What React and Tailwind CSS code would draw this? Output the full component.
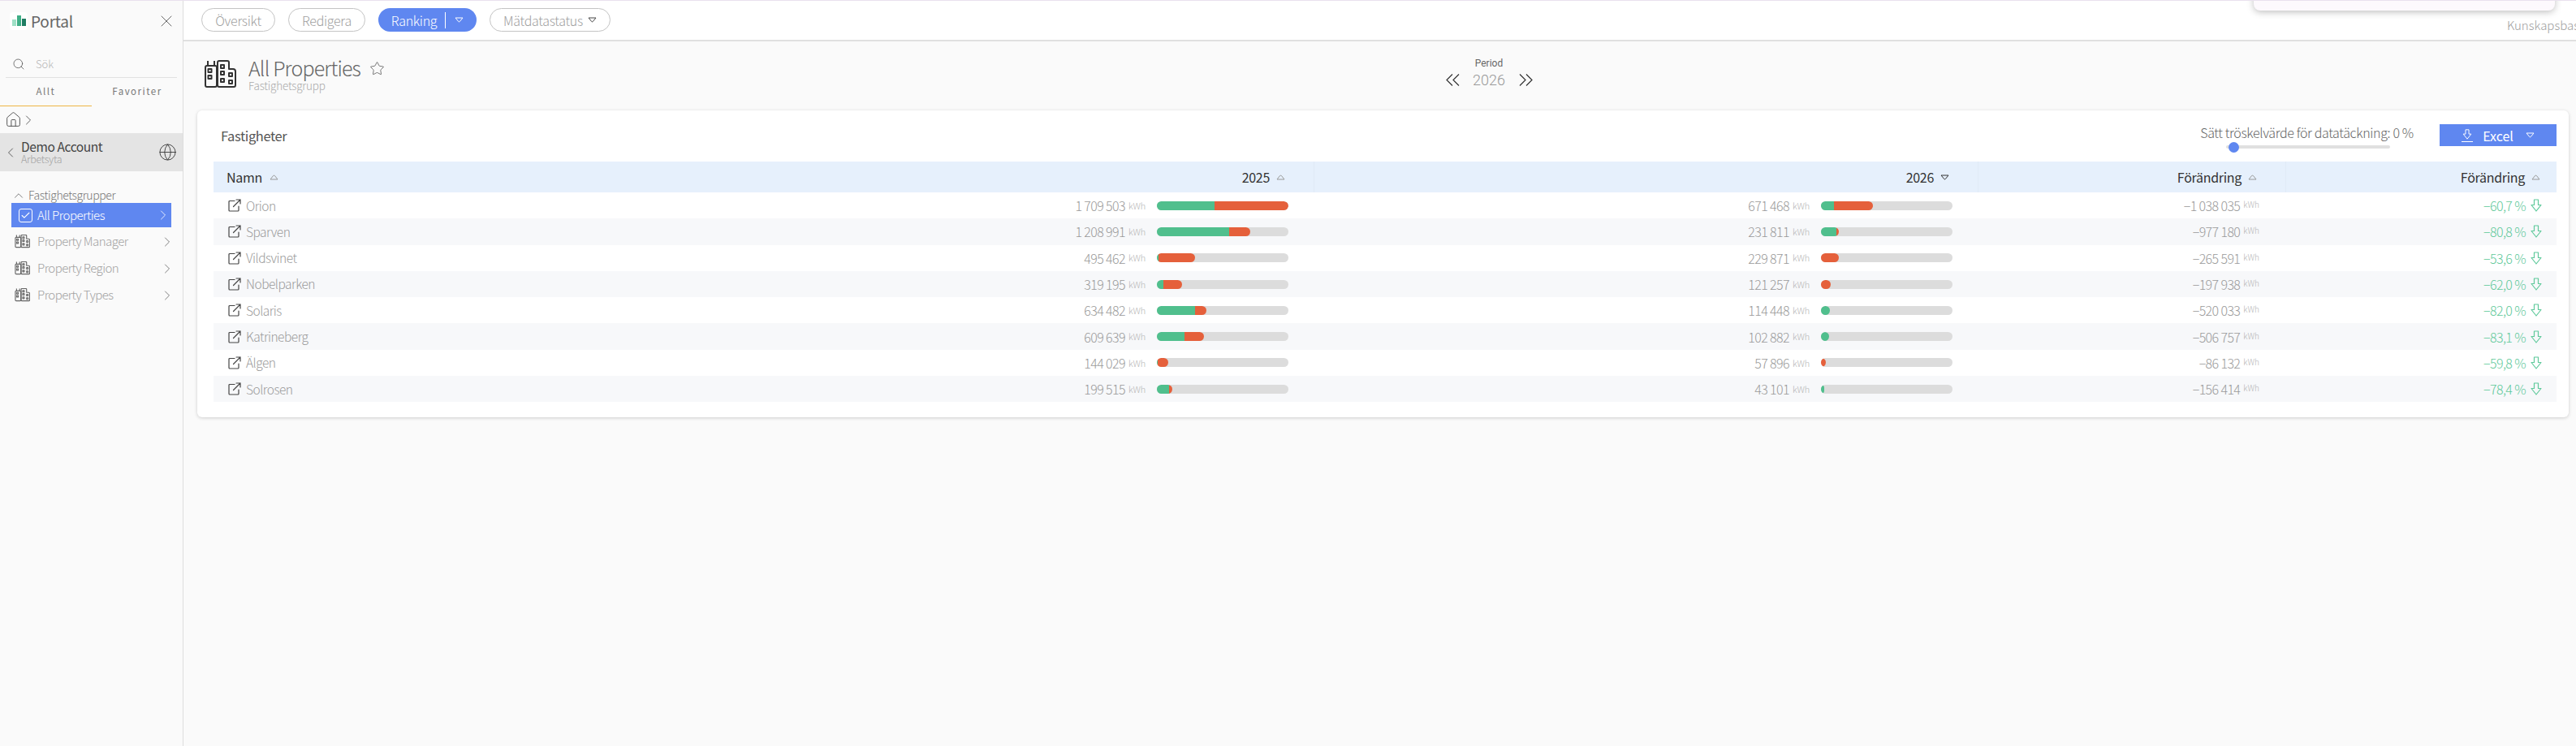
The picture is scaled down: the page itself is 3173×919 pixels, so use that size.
import React from "react";
import { Search, X, ChevronRight, ChevronLeft, ChevronUp, Globe, Star, House, Check } from "lucide-react";

const rows = [
  { name: "Orion", a: "1 709 503", aBar: [71, 91], b: "671 468", bBar: [16, 48], diff: "−1 038 035", pct: "−60,7 %" },
  { name: "Sparven", a: "1 208 991", aBar: [89, 26], b: "231 811", bBar: [19, 3], diff: "−977 180", pct: "−80,8 %" },
  { name: "Vildsvinet", a: "495 462", aBar: [2, 45], b: "229 871", bBar: [0, 22], diff: "−265 591", pct: "−53,6 %" },
  { name: "Nobelparken", a: "319 195", aBar: [8, 23], b: "121 257", bBar: [0, 12], diff: "−197 938", pct: "−62,0 %" },
  { name: "Solaris", a: "634 482", aBar: [47, 14], b: "114 448", bBar: [11, 0], diff: "−520 033", pct: "−82,0 %" },
  { name: "Katrineberg", a: "609 639", aBar: [34, 24], b: "102 882", bBar: [10, 0], diff: "−506 757", pct: "−83,1 %" },
  { name: "Älgen", a: "144 029", aBar: [1, 13], b: "57 896", bBar: [0, 6], diff: "−86 132", pct: "−59,8 %" },
  { name: "Solrosen", a: "199 515", aBar: [15, 4], b: "43 101", bBar: [4, 0], diff: "−156 414", pct: "−78,4 %" },
];

const cols = "grid grid-cols-[538px_818px_818px_379px_333px]";
const numText = "tracking-[-0.6px]";

function Caret({ up, className = "" }) {
  return (
    <svg width="11" height="7" viewBox="0 0 11 7" className={className} fill="none" stroke="currentColor" strokeWidth="1">
      {up ? <path d="M1 6 L4.5 1.5 Q5.5 .8 6.5 1.5 L10 6 Z" /> : <path d="M1 1 L10 1 L6.2 5.6 Q5.5 6.2 4.8 5.6 Z" />}
    </svg>
  );
}

function Buildings({ size = 40, className = "", sw = 2 }) {
  return (
    <svg width={size} height={size * 0.85} viewBox="0 0 40 34" className={className} fill="none" stroke="currentColor" strokeWidth={sw} strokeLinejoin="round">
      <path d="M2 9 a2 2 0 0 1 2-2 h10 a2 2 0 0 1 2 2 v22 a2 2 0 0 1-2 2 h-10 a2 2 0 0 1-2-2 z" />
      <path d="M5 7 V1 M13 7 V1" />
      <rect x="5.5" y="11" width="4" height="4" />
      <rect x="5.5" y="19" width="4" height="4" />
      <path d="M17 3 a2 2 0 0 1 2-2 h10 a2 2 0 0 1 2 2 v8 h5 a3 3 0 0 1 3 3 v17 a2 2 0 0 1-2 2 h-18 a2 2 0 0 1-2-2 z" />
      <rect x="21" y="6" width="4" height="4" />
      <rect x="21" y="14" width="4" height="4" />
      <rect x="21" y="23" width="4" height="4" />
      <rect x="31" y="16" width="4" height="4" />
      <rect x="31" y="25" width="4" height="4" />
    </svg>
  );
}

function ExternalIcon() {
  return (
    <svg width="16" height="16" viewBox="0 0 16 16" fill="none" stroke="#444" strokeWidth="1.2" strokeLinecap="round" className="shrink-0">
      <path d="M8 2.5 H2 a1 1 0 0 0-1 1 V14 a1 1 0 0 0 1 1 H12 a1 1 0 0 0 1-1 V9" />
      <path d="M6.5 9.5 L15 1 M10 1 H15 V6" />
    </svg>
  );
}

function DownArrow({ className = "" }) {
  return (
    <svg width="14" height="16" viewBox="0 0 14 16" fill="none" stroke="currentColor" strokeWidth="1.2" strokeLinejoin="round" className={className}>
      <path d="M4.5 1 H9.5 V7.5 H13 L7 15 L1 7.5 H4.5 Z" />
    </svg>
  );
}

function DoubleChevron({ right }) {
  return (
    <svg width="17" height="15" viewBox="0 0 17 15" fill="none" stroke="#333" strokeWidth="1.2" className={right ? "rotate-180" : ""}>
      <path d="M8 .5 L1 7.5 L8 14.5 M16 .5 L9 7.5 L16 14.5" />
    </svg>
  );
}

function Bar({ parts }) {
  return (
    <div className="flex h-[11px] w-[162px] shrink-0 overflow-hidden rounded-full bg-[#dcdcdc]">
      <div className="flex overflow-hidden rounded-r-full">
        <div className="h-full bg-[#50bf8d]" style={{ width: parts[0] }} />
        <div className="h-full bg-[#e5603b]" style={{ width: parts[1] }} />
      </div>
    </div>
  );
}

function Pill({ children, className = "" }) {
  return (
    <div className={`flex h-[29px] items-center justify-center rounded-full border border-[#c4c4c4] text-[16px] tracking-[-0.3px] text-[#a0a0a0] ${className}`}>
      {children}
    </div>
  );
}

function SideRow({ label }) {
  return (
    <div className="flex h-[33px] items-center pl-[18px] pr-[9px] text-[15px] tracking-[-0.55px] text-[#a3a3a3]">
      <Buildings size={19} sw={2.4} className="text-[#666]" />
      <span className="ml-[9px] flex-1">{label}</span>
      <ChevronRight size={20} strokeWidth={1} className="text-[#666]" />
    </div>
  );
}

export default function App() {
  return (
    <div className="relative flex h-[919px] w-[3173px] overflow-hidden border-t border-[#e9e1ee] bg-[#fafafa] font-['Noto_Sans_CJK_SC',sans-serif] font-light">
      {/* Sidebar */}
      <aside className="flex w-[226px] shrink-0 flex-col border-r border-[#dddddd] bg-[#fafafa]">
        <div className="flex h-[50px] items-center pl-[12px] pr-[8px]">
          <div className="flex h-[22px] w-[22px] items-end justify-center gap-[1px] rounded bg-white pb-[5px]">
            <div className="h-[8px] w-[5px] bg-[#9fe0c6]" />
            <div className="h-[13px] w-[5px] bg-[#3fae86]" />
            <div className="h-[9px] w-[5px] bg-[#1f7d63]" />
          </div>
          <span className="ml-[4px] flex-1 text-[19px] font-normal tracking-[-0.2px] text-[#666]">Portal</span>
          <X size={24} strokeWidth={0.8} className="text-[#444]" />
        </div>
        <div className="mx-[7px] mt-[12px] flex h-[33px] items-center border-b border-[#e2e2e2] pl-[8px]">
          <Search size={16} strokeWidth={1.2} className="text-[#555]" />
          <span className="ml-[13px] text-[13px] text-[#b5b5b5]">Sök</span>
        </div>
        <div className="flex h-[35px] text-[11.5px] font-normal tracking-[1.5px] text-[#777]">
          <div className="flex w-[113px] items-center justify-center border-b border-[#eeb545]">Allt</div>
          <div className="flex flex-1 items-center justify-center pb-[1px]">Favoriter</div>
        </div>
        <div className="flex h-[33px] items-center pl-[6px]">
          <House size={21} strokeWidth={1} className="text-[#444]" />
          <ChevronRight size={20} strokeWidth={1} className="-ml-[2px] text-[#444]" />
        </div>
        <div className="flex h-[47px] items-center bg-[#e4e4e4] pl-[3px] pr-[7px]">
          <ChevronLeft size={20} strokeWidth={1} className="text-[#444]" />
          <div className="ml-[3px] flex-1 leading-none">
            <div className="text-[15.5px] font-normal tracking-[-0.4px] text-[#444]">Demo Account</div>
            <div className="mt-[2px] text-[12.5px] tracking-[-0.3px] text-[#a3a3a3]">Arbetsyta</div>
          </div>
          <Globe size={23} strokeWidth={0.9} className="text-[#333]" />
        </div>
        <div className="mt-[21px] flex h-[17px] items-center pl-[14px] text-[14px] tracking-[-0.4px] text-[#777]">
          <ChevronUp size={18} strokeWidth={1} className="text-[#555]" />
          <span className="ml-[3px]">Fastighetsgrupper</span>
        </div>
        <div className="mx-[14px] mt-[1px] flex h-[30px] items-center bg-[#5f87f0] pl-[9px] text-[15px] tracking-[-0.5px] text-white">
          <div className="flex h-[17px] w-[17px] items-center justify-center rounded-[3px] border border-white">
            <Check size={13} strokeWidth={2} />
          </div>
          <span className="ml-[6px] flex-1">All Properties</span>
          <ChevronRight size={20} strokeWidth={1} />
        </div>
        <div className="mt-[1px]">
          <SideRow label="Property Manager" />
          <SideRow label="Property Region" />
          <SideRow label="Property Types" />
        </div>
      </aside>

      {/* Main */}
      <main className="flex min-w-0 flex-1 flex-col">
        <header className="flex h-[50px] shrink-0 items-center gap-[16px] border-b-2 border-[#e0e0e0] bg-white pb-[1px] pl-[22px]">
          <Pill className="w-[91px]">Översikt</Pill>
          <Pill className="w-[95px]">Redigera</Pill>
          <div className="flex h-[29px] w-[121px] items-center justify-center rounded-full bg-[#5f87f0] text-[16px] tracking-[-0.3px] text-white">
            Ranking
            <span className="mx-[10px] h-[20px] w-px bg-white" />
            <Caret className="ml-[1px]" />
          </div>
          <Pill className="w-[149px]">
            Mätdatastatus
            <Caret className="ml-[6px] text-[#444]" />
          </Pill>
          <span className="ml-auto -mr-[4px] mt-[13px] shrink-0 text-[15px] text-[#a0a0a0]">Kunskapsbas</span>
        </header>

        <div className="relative flex h-[85px] shrink-0 items-start pl-[25px] pt-[23px]">
          <Buildings size={40} className="text-[#333]" />
          <div className="ml-[15px] -mt-[3px] leading-none">
            <div className="text-[25px] leading-[24px] tracking-[-0.85px] text-[#666]">All Properties</div>
            <div className="mt-[1px] text-[13.5px] leading-[18px] tracking-[-0.2px] text-[#aaa]">Fastighetsgrupp</div>
          </div>
          <Star size={19} strokeWidth={0.9} className="ml-[11px] mt-[1px] text-[#444]" />
          <div className="absolute left-[1553px] top-[20px] flex w-[110px] flex-col items-center font-['Roboto',sans-serif]">
            <span className="text-[12px] font-normal leading-[14px] text-[#666]">Period</span>
            <div className="flex h-[26px] w-[107px] items-center justify-between">
              <DoubleChevron />
              <span className="text-[18px] text-[#999]">2026</span>
              <DoubleChevron right />
            </div>
          </div>
        </div>

        {/* Card */}
        <section className="ml-[17px] w-[2921px] rounded-[6px] bg-white pb-[19px] pl-[20px] pr-[15px] shadow-[0_1px_4px_rgba(0,0,0,0.18)]">
          <div className="flex h-[63px] items-start">
            <span className="ml-[9px] mt-[21px] text-[16.5px] font-normal leading-5 tracking-[-0.4px] text-[#555]">Fastigheter</span>
            <div className="ml-auto mt-[17px] flex w-[261px] flex-col items-center">
              <span className="whitespace-nowrap text-[16px] leading-5 tracking-[-0.35px] text-[#666]">Sätt tröskelvärde för datatäckning: 0 %</span>
              <div className="relative mt-[6px] ml-[2px] h-[4px] w-[202px] rounded-full bg-[#e0e0e0]">
                <div className="absolute -top-[4.5px] left-[3px] h-[13px] w-[13px] rounded-full bg-[#5f87f0]" />
              </div>
            </div>
            <div className="ml-[33px] mt-[17px] flex h-[27px] w-[144px] items-center justify-center bg-[#5f87f0] text-[16px] font-normal text-white">
              <DownArrow className="mr-[12px] border-b border-white pb-[2px]" />
              Excel
              <Caret className="ml-[15px]" />
            </div>
          </div>

          <div className={`${cols} h-[38px] items-stretch bg-[#e6f0fc] text-[16px] font-normal tracking-[-0.3px] text-[#333]`}>
            <div className="flex items-center pl-[16px]">
              Namn <Caret up className="ml-[9px] text-[#999]" />
            </div>
            <div className="flex items-center justify-end border-r border-[#e0eaf6] pr-[35px]">
              2025 <Caret up className="ml-[8px] text-[#999]" />
            </div>
            <div className="flex items-center justify-end border-r border-[#e0eaf6] pr-[35px]">
              2026 <Caret className="ml-[8px] text-[#333]" />
            </div>
            <div className="flex items-center justify-end border-r border-[#e0eaf6] pr-[35px]">
              Förändring <Caret up className="ml-[8px] text-[#999]" />
            </div>
            <div className="flex items-center justify-end pr-[20px]">
              Förändring <Caret up className="ml-[8px] text-[#999]" />
            </div>
          </div>

          {rows.map((r, i) => (
            <div key={r.name} className={`${cols} h-[32.3px] items-center text-[16px] text-[#9a9a9a] ${i % 2 ? "bg-[#f7f8fa]" : "bg-white"}`}>
              <div className="flex items-center gap-[6px] pl-[18px] text-[15.5px] tracking-[-0.5px]">
                <ExternalIcon />
                {r.name}
              </div>
              <div className="flex items-center justify-end pr-[32px]">
                <span className={numText}>{r.a}</span>
                <span className="ml-[4px] text-[11px] tracking-[-0.2px] text-[#b4b4b4]">kWh</span>
                <div className="ml-[14px]"><Bar parts={r.aBar} /></div>
              </div>
              <div className="flex items-center justify-end pr-[32px]">
                <span className={numText}>{r.b}</span>
                <span className="ml-[4px] text-[11px] tracking-[-0.2px] text-[#b4b4b4]">kWh</span>
                <div className="ml-[14px]"><Bar parts={r.bBar} /></div>
              </div>
              <div className="flex items-center justify-end pr-[33px]">
                <span className={numText}>{r.diff}</span>
                <span className="relative -top-[1px] ml-[4px] self-start text-[10px] leading-[24px] text-[#b4b4b4]">kWh</span>
              </div>
              <div className="flex items-center justify-end pr-[18px] text-[#5fc99b]">
                <span className={numText}>{r.pct}</span>
                <DownArrow className="ml-[6px]" />
              </div>
            </div>
          ))}
        </section>
      </main>

      {/* Popover cut off at the top of the page */}
      <div className="absolute -top-[20px] left-[2776px] h-[32px] w-[371px] rounded-b-[8px] bg-[#fdf9fd] shadow-[0_2px_8px_rgba(0,0,0,0.25)]" />
    </div>
  );
}
